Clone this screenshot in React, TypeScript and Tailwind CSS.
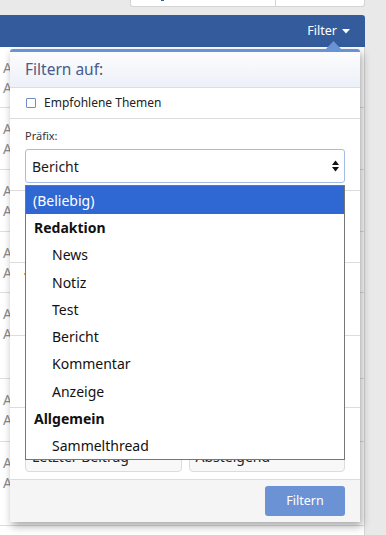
import React from "react";

const rows = [61, 62, 62, 61, 86, 63, 84];

const options: { label: string; group?: boolean; active?: boolean }[] = [
  { label: "(Beliebig)", active: true },
  { label: "Redaktion", group: true },
  { label: "News" },
  { label: "Notiz" },
  { label: "Test" },
  { label: "Bericht" },
  { label: "Kommentar" },
  { label: "Anzeige" },
  { label: "Allgemein", group: true },
  { label: "Sammelthread" },
];

function Caret({ className = "" }: { className?: string }) {
  return (
    <svg width="8" height="5" viewBox="0 0 8 5" className={className}>
      <path d="M0 0 L8 0 L4 4.5 Z" fill="currentColor" />
    </svg>
  );
}

function UpDown() {
  return (
    <svg width="7" height="12" viewBox="0 0 7 12">
      <path d="M3.5 0.5 L7 5 L0 5 Z" fill="#111" />
      <path d="M0 7 L7 7 L3.5 11.5 Z" fill="#111" />
    </svg>
  );
}

export default function App() {
  return (
    <div className="relative w-[386px] h-[535px] overflow-hidden bg-[#e9e9e9] font-['Noto_Sans',sans-serif]">
      {/* top tabs box */}
      <div className="ml-[130px] w-[235px] h-[7px] bg-white border border-t-0 border-[#d4d4d4] rounded-b-[3px] flex">
        <div className="w-[145px] border-r border-[#d4d4d4] pl-[30px]">
          <div className="w-[3px] h-[1px] bg-[#2f5da8]" />
        </div>
      </div>

      {/* blue bar */}
      <div className="mt-[8px] w-[365px] h-[32px] bg-[#345c9c] rounded-tr-[3px] flex items-center justify-end pr-[15px] text-white text-[12.5px]">
        <span className="leading-none">Filter</span>
        <Caret className="ml-[5px] mt-[1px]" />
      </div>

      {/* list beneath */}
      <div className="w-[365px] h-[488px] bg-white border-r border-[#d6d6d6]">
        {rows.map((h, i) => (
          <div key={i} className="border-b border-[#dedede] pt-[11px]" style={{ height: h }}>
            <div className="w-[10px] overflow-hidden whitespace-nowrap pl-[3px] text-[14px] leading-[20px] text-[#8a8a8a]">
              <div>Antworten</div>
              <div>Aufrufe</div>
            </div>
          </div>
        ))}
      </div>

      {/* popup */}
      <div className="absolute left-[10px] top-[49px] w-[350px] bg-white border-t-[3px] border-[#6a93d4] rounded-t-[3px] shadow-[2px_4px_8px_rgba(0,0,0,0.35)]">
        <svg width="17" height="9" viewBox="0 0 17 9" className="absolute right-[18px] top-[-11px]">
          <path d="M0 9 L8.5 0 L17 9 Z" fill="#6a93d4" />
        </svg>

        <div className="h-[36px] flex items-center px-[15px] border-b border-[#dcdcdc] bg-gradient-to-b from-[#fdfdfe] to-[#ecf0f8] text-[15.5px] text-[#4a5a8b]">
          Filtern auf:
        </div>

        <div className="h-[31px] border-b border-[#dcdcdc] flex items-center px-[16px] text-[12px] text-[#222]">
          <span className="w-[10px] h-[10px] border border-[#6f8cc4] rounded-[1px] bg-white mr-[8px]" />
          Empfohlene Themen
        </div>

        <div className="h-[72px] border-b border-[#dcdcdc] px-[15px] pt-[9px]">
          <div className="text-[11px] leading-[16px] text-[#333]">Präfix:</div>
          <div className="mt-[5px] h-[34px] border border-[#a3bde8] rounded-[3px] flex items-center justify-between pl-[6px] pr-[5px] text-[14px] text-[#1a1a1a]">
            <span>Bericht</span>
            <UpDown />
          </div>
        </div>

        <div className="h-[72px] border-b border-[#dcdcdc]" />
        <div className="h-[73px] border-b border-[#dcdcdc] pl-[14px] pt-[10px]">
          <div className="w-[2px] h-[2px] bg-[#f0a030]" />
        </div>
        <div className="h-[72px] border-b border-[#dcdcdc]" />

        <div className="h-[72px] border-b border-[#dcdcdc] px-[15px] pt-[31px] flex gap-[7px]">
          <div className="flex-1 h-[33px] border border-[#dcdcdc] rounded-[4px] bg-[#f8f8f8] flex items-center justify-between pl-[6px] pr-[6px] pt-[2px] text-[14px] text-[#222]">
            <span>Letzter Beitrag</span>
            <Caret className="scale-50" />
          </div>
          <div className="flex-1 h-[33px] border border-[#dcdcdc] rounded-[4px] bg-[#f8f8f8] flex items-center justify-between pl-[6px] pr-[6px] pt-[2px] text-[14px] text-[#222]">
            <span>Absteigend</span>
            <Caret className="scale-50" />
          </div>
        </div>

        <div className="h-[42px] bg-[#f5f5f5] flex items-center justify-end px-[15px]">
          <button className="w-[80px] h-[30px] rounded-[3px] bg-[#6a92d5] text-white text-[12.5px]">Filtern</button>
        </div>
      </div>

      {/* open native select list */}
      <div className="absolute left-[25px] top-[185px] w-[320px] h-[275px] bg-white border border-[#767676] text-[14px] text-[#111]">
        {options.map((o) => (
          <div
            key={o.label}
            className={
              o.active
                ? "h-[28px] flex items-center pl-[7px] bg-[#2f68d3] text-white"
                : o.group
                ? "h-[27.25px] flex items-center pl-[8px] font-bold"
                : "h-[27.25px] flex items-center pl-[26px]"
            }
          >
            {o.label}
          </div>
        ))}
      </div>
    </div>
  );
}
